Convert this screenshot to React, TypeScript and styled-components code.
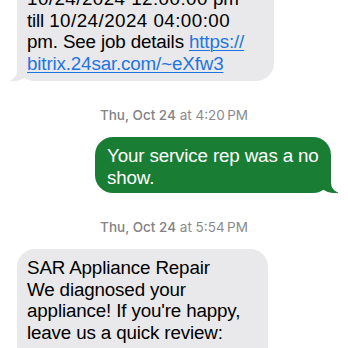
import React from "react";
import styled, { createGlobalStyle } from "styled-components";

const Global = createGlobalStyle`
  html, body { margin: 0; padding: 0; background: #ffffff; }
  body { width: 348px; height: 348px; overflow: hidden; font-family: "Liberation Sans", Arial, sans-serif; }
`;

const Thread = styled.div`
  display: flex;
  flex-direction: column;
  margin-top: -20px;
  padding: 0 17px 0 17px;
`;

const Stamp = styled.div`
  align-self: center;
  font-family: Inter, "Liberation Sans", sans-serif;
  font-size: 13.5px;
  line-height: 17px;
  color: #8a8a8e;
  margin: 26px 0 13px;
  b { font-weight: 500; color: #828286; }
`;

const Bubble = styled.div<{ $me?: boolean; $w: number; $more?: boolean }>`
  position: relative;
  z-index: 0;
  box-sizing: border-box;
  width: ${(p) => p.$w}px;
  align-self: ${(p) => (p.$me ? "flex-end" : "flex-start")};
  background: ${(p) => (p.$me ? "#197d34" : "#e9e9eb")};
  color: ${(p) => (p.$me ? "#ffffff" : "#000000")};
  border-radius: 18px;
  padding: ${(p) => (p.$me ? "8px 12px 5px 12px" : "8px 12px 7px 10px")};
  padding-bottom: ${(p) => (p.$more ? "40px" : undefined)};
  font-size: 18.8px;
  letter-spacing: -0.15px;
  line-height: 21.5px;
  white-space: nowrap;

  &::before {
    content: "";
    position: absolute;
    z-index: -1;
    bottom: 0;
    ${(p) => (p.$me ? "right: -7px;" : "left: -7px;")}
    width: 20px;
    height: 22px;
    background: ${(p) => (p.$me ? "#197d34" : "#e9e9eb")};
    ${(p) =>
      p.$me
        ? "border-bottom-left-radius: 16px 14px;"
        : "border-bottom-right-radius: 16px 14px;"}
  }
  &::after {
    content: "";
    position: absolute;
    z-index: -1;
    bottom: 0;
    ${(p) => (p.$me ? "right: -26px;" : "left: -26px;")}
    width: 26px;
    height: 22px;
    background: #ffffff;
    ${(p) =>
      p.$me
        ? "border-bottom-left-radius: 10px;"
        : "border-bottom-right-radius: 10px;"}
  }
`;

const Num = styled.span`
  letter-spacing: 0.45px;
`;

const Link = styled.span`
  color: #1f74e3;
  text-decoration: underline;
  text-decoration-thickness: 1px;
  text-underline-offset: 2px;
`;

export default function App() {
  return (
    <>
      <Global />
      <Thread>
        <Bubble $w={257}>
          <Num>10/24/2024 12:00:00</Num> pm
          <br />
          till <Num>10/24/2024 04:00:00</Num>
          <br />
          pm. See job details <Link>https://</Link>
          <br />
          <Link>bitrix.24sar.com/~eXfw3</Link>
        </Bubble>
        <Stamp>
          <b>Thu, Oct 24</b> at 4:20{"\u2009"}PM
        </Stamp>
        <Bubble $me $w={236}>
          Your service rep was a no
          <br />
          show.
        </Bubble>
        <Stamp>
          <b>Thu, Oct 24</b> at 5:54{"\u2009"}PM
        </Stamp>
        <Bubble $w={251} $more>
          SAR Appliance Repair
          <br />
          We diagnosed your
          <br />
          appliance! If you're happy,
          <br />
          leave us a quick review:
        </Bubble>
      </Thread>
    </>
  );
}
